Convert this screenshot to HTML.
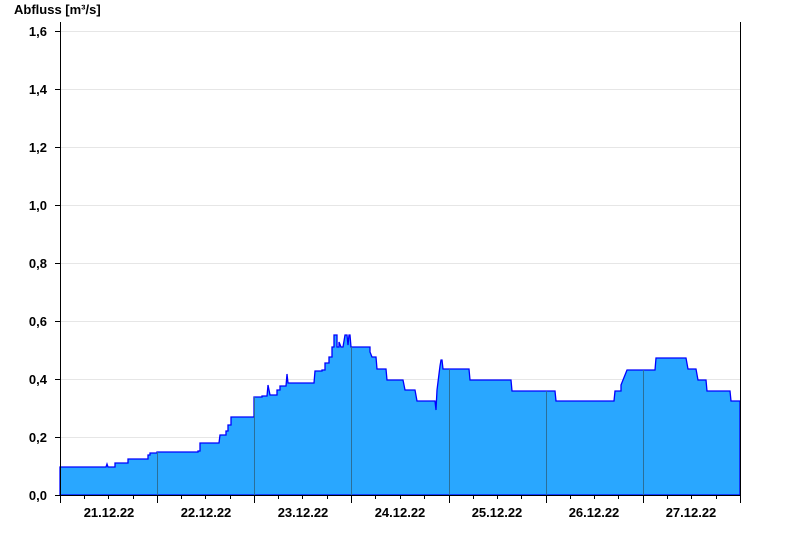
<!DOCTYPE html>
<html><head><meta charset="utf-8"><style>
html,body{margin:0;padding:0;background:#fff;width:800px;height:550px;overflow:hidden}
svg text{font-family:"Liberation Sans",Arial,sans-serif;font-weight:bold;font-size:13px;fill:#000}
</style></head><body>
<svg width="800" height="550" viewBox="0 0 800 550" xmlns="http://www.w3.org/2000/svg">
<g stroke="#e6e6e6" stroke-width="1">
<line x1="61" y1="437.5" x2="740" y2="437.5"/>
<line x1="61" y1="379.5" x2="740" y2="379.5"/>
<line x1="61" y1="321.5" x2="740" y2="321.5"/>
<line x1="61" y1="263.5" x2="740" y2="263.5"/>
<line x1="61" y1="205.5" x2="740" y2="205.5"/>
<line x1="61" y1="147.5" x2="740" y2="147.5"/>
<line x1="61" y1="89.5" x2="740" y2="89.5"/>
<line x1="61" y1="31.5" x2="740" y2="31.5"/>
</g>
<polygon fill="#29a7ff" stroke="#0000ff" stroke-width="1.3" points="60,495 60,467 106,467 107,464 108,467 115,467 115,463 128,463 128,459 148,459 148,455 150,455 150,453 157,453 157,452 198,452 198,451 200,451 200,443 219,443 220,435 226,435 226,431 228,431 228,425 231,425 231,417 254,417 254,397 262,397 262,396 267,396 268,385 270,395 277,395 277,390 280,390 280,386 286,386 287,374 288,383 314,383 315,371 322,371 322,370 325,370 325,363 329,363 329,357 332,357 332,347 334,347 334,335 337,335 337,347 339,347 339,342 341,347 343,347 345,335 347,335 348,345 349,335 350,335 351,347 370,347 370,352 372,357 376,357 377,369 386,369 387,380 403,380 405,390 415,390 417,401 435,401 436,410 437,390 440,366 441,360 442,360 443,369 469,369 470,380 511,380 512,391 555,391 556,401 614,401 615,391 621,391 621,385 623,380 627,370 655,370 656,358 686,358 688,369 696,369 698,380 706,380 707,391 730,391 731,401 740,401 740,495"/>
<g stroke="#2a6f9a" stroke-width="1">
<line x1="157.5" y1="452" x2="157.5" y2="495"/>
<line x1="254.5" y1="397" x2="254.5" y2="495"/>
<line x1="351.5" y1="347" x2="351.5" y2="495"/>
<line x1="449.5" y1="369" x2="449.5" y2="495"/>
<line x1="546.5" y1="391" x2="546.5" y2="495"/>
<line x1="643.5" y1="370" x2="643.5" y2="495"/>
</g>
<g stroke="#000" stroke-width="1">
<line x1="60.5" y1="22" x2="60.5" y2="496"/>
<line x1="740.5" y1="22" x2="740.5" y2="496"/>
<line x1="55" y1="495.5" x2="741" y2="495.5"/>
<line x1="55" y1="437.5" x2="60" y2="437.5"/>
<line x1="55" y1="379.5" x2="60" y2="379.5"/>
<line x1="55" y1="321.5" x2="60" y2="321.5"/>
<line x1="55" y1="263.5" x2="60" y2="263.5"/>
<line x1="55" y1="205.5" x2="60" y2="205.5"/>
<line x1="55" y1="147.5" x2="60" y2="147.5"/>
<line x1="55" y1="89.5" x2="60" y2="89.5"/>
<line x1="55" y1="31.5" x2="60" y2="31.5"/>
<line x1="60.5" y1="495" x2="60.5" y2="503"/>
<line x1="84.5" y1="495" x2="84.5" y2="499"/>
<line x1="108.5" y1="495" x2="108.5" y2="499"/>
<line x1="133.5" y1="495" x2="133.5" y2="499"/>
<line x1="157.5" y1="495" x2="157.5" y2="503"/>
<line x1="181.5" y1="495" x2="181.5" y2="499"/>
<line x1="205.5" y1="495" x2="205.5" y2="499"/>
<line x1="230.5" y1="495" x2="230.5" y2="499"/>
<line x1="254.5" y1="495" x2="254.5" y2="503"/>
<line x1="278.5" y1="495" x2="278.5" y2="499"/>
<line x1="302.5" y1="495" x2="302.5" y2="499"/>
<line x1="327.5" y1="495" x2="327.5" y2="499"/>
<line x1="351.5" y1="495" x2="351.5" y2="503"/>
<line x1="375.5" y1="495" x2="375.5" y2="499"/>
<line x1="400.5" y1="495" x2="400.5" y2="499"/>
<line x1="424.5" y1="495" x2="424.5" y2="499"/>
<line x1="449.5" y1="495" x2="449.5" y2="503"/>
<line x1="473.5" y1="495" x2="473.5" y2="499"/>
<line x1="497.5" y1="495" x2="497.5" y2="499"/>
<line x1="521.5" y1="495" x2="521.5" y2="499"/>
<line x1="546.5" y1="495" x2="546.5" y2="503"/>
<line x1="570.5" y1="495" x2="570.5" y2="499"/>
<line x1="594.5" y1="495" x2="594.5" y2="499"/>
<line x1="618.5" y1="495" x2="618.5" y2="499"/>
<line x1="643.5" y1="495" x2="643.5" y2="503"/>
<line x1="667.5" y1="495" x2="667.5" y2="499"/>
<line x1="691.5" y1="495" x2="691.5" y2="499"/>
<line x1="716.5" y1="495" x2="716.5" y2="499"/>
<line x1="740.5" y1="495" x2="740.5" y2="503"/>
</g>
<text x="14" y="14">Abfluss [m³/s]</text>
<g text-anchor="end">
<text x="47" y="500">0,0</text>
<text x="47" y="442">0,2</text>
<text x="47" y="384">0,4</text>
<text x="47" y="326">0,6</text>
<text x="47" y="268">0,8</text>
<text x="47" y="210">1,0</text>
<text x="47" y="152">1,2</text>
<text x="47" y="94">1,4</text>
<text x="47" y="36">1,6</text>
</g>
<g text-anchor="middle">
<text x="109" y="517">21.12.22</text>
<text x="206" y="517">22.12.22</text>
<text x="303" y="517">23.12.22</text>
<text x="400" y="517">24.12.22</text>
<text x="497" y="517">25.12.22</text>
<text x="594" y="517">26.12.22</text>
<text x="691" y="517">27.12.22</text>
</g>
</svg>
</body></html>
